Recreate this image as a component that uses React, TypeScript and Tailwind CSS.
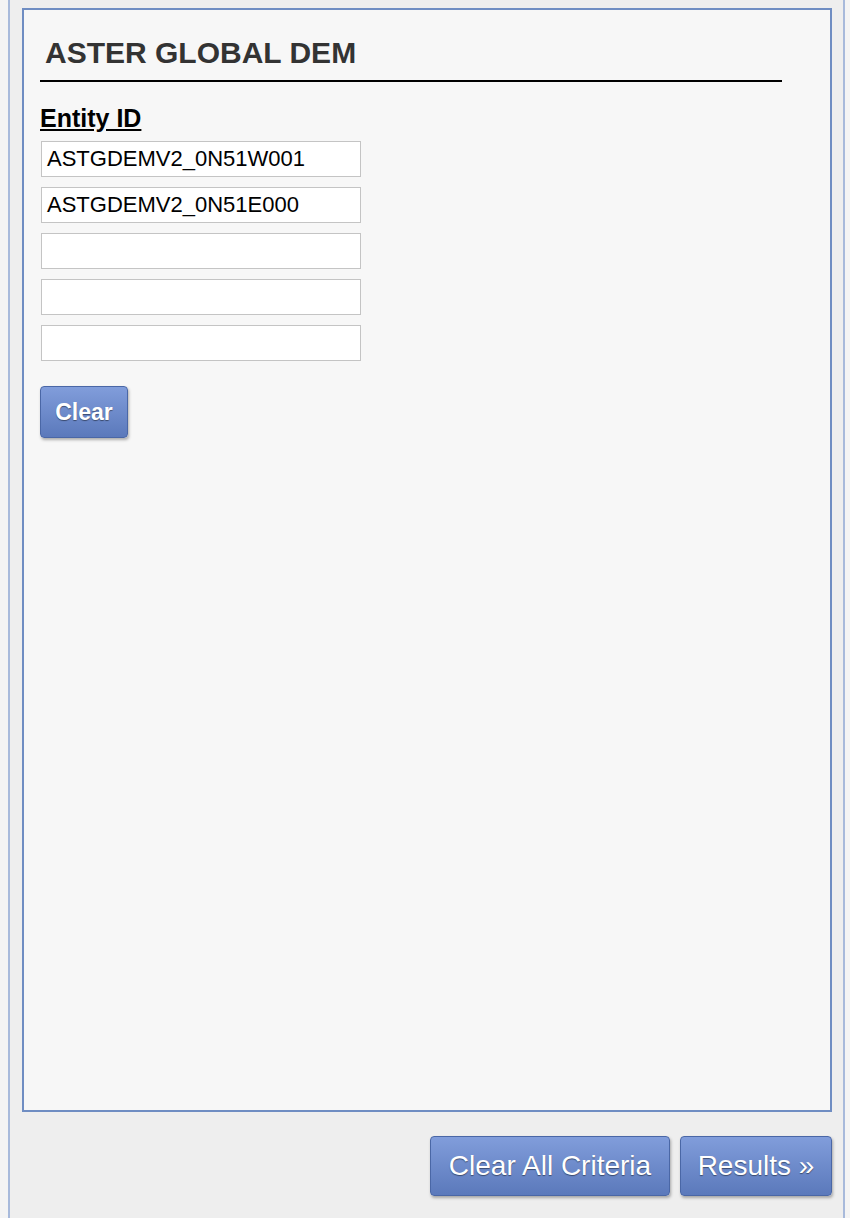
import React from "react";

const btn =
  "rounded-[4px] border border-[#4a67a6] bg-gradient-to-b from-[#819ddb] to-[#5b79bb] text-white [text-shadow:0_1px_1px_rgba(0,0,0,0.45)] shadow-[1px_2px_3px_rgba(0,0,0,0.3)]";

export default function App() {
  const values = ["ASTGDEMV2_0N51W001", "ASTGDEMV2_0N51E000", "", "", ""];
  return (
    <div className="w-[850px] h-[1218px] bg-[#f4f4f4] overflow-hidden [font-family:'Liberation_Sans',Arial,sans-serif]">
      <div className="ml-[8px] w-[837px] h-[1218px] border-x-2 border-[#a8badb] bg-[#eeeeee] pt-[8px] pl-[12px] pr-[11px] flex flex-col">
        <div className="h-[1104px] border-2 border-[#6f8dc2] bg-[#f7f7f7] pl-[16px] pr-[48px] pt-[25px]">
          <h1 className="pl-[5px] text-[30px] leading-[35px] font-bold text-[#333333]">
            ASTER GLOBAL DEM
          </h1>
          <div className="mt-[10px] h-[2px] bg-black" />
          <div className="mt-[22px] text-[25px] leading-[29px] font-bold underline text-black">
            Entity ID
          </div>
          <div className="mt-[8px] flex flex-col gap-[10px]">
            {values.map((v, i) => (
              <div
                key={i}
                className="w-[320px] h-[36px] ml-[1px] border border-[#c4c4c4] bg-white pl-[5px] text-[22px] leading-[34px] text-black"
              >
                {v}
              </div>
            ))}
          </div>
          <button
            className={`mt-[25px] w-[88px] h-[52px] text-[23px] font-bold ${btn}`}
          >
            Clear
          </button>
        </div>
        <div className="mt-[24px] flex justify-end gap-[10px]">
          <button className={`w-[240px] h-[60px] text-[28px] ${btn}`}>
            Clear All Criteria
          </button>
          <button className={`w-[152px] h-[60px] text-[28px] ${btn}`}>
            Results »
          </button>
        </div>
      </div>
    </div>
  );
}
